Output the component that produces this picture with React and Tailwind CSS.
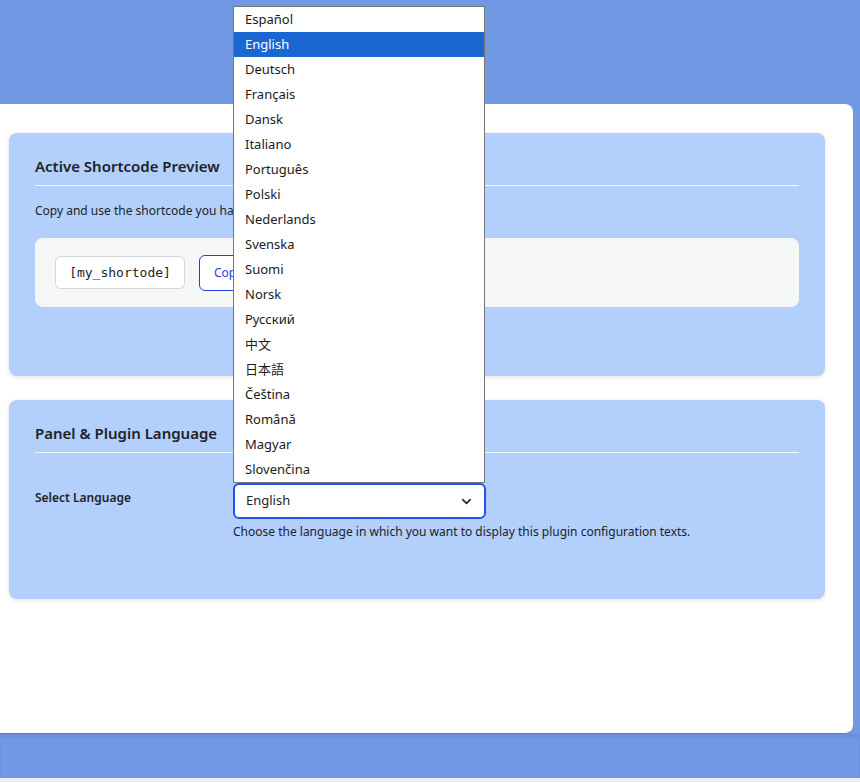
import React, { useState } from 'react'
import { ChevronDown } from 'lucide-react'

const languages = [
  'Español',
  'English',
  'Deutsch',
  'Français',
  'Dansk',
  'Italiano',
  'Português',
  'Polski',
  'Nederlands',
  'Svenska',
  'Suomi',
  'Norsk',
  'Русский',
  '中文',
  '日本語',
  'Čeština',
  'Română',
  'Magyar',
  'Slovenčina',
]

const font = { fontFamily: '"Noto Sans", "Noto Sans CJK SC", sans-serif' }

const Card = ({ title, className, children }) => (
  <div className={`rounded-lg bg-[#b3cffc] px-[26px] pt-[23px] shadow-[0_1px_4px_rgba(0,0,0,0.12)] ${className}`}>
    <h2 className="border-b border-white/80 pb-[8px] text-[15px] font-semibold leading-[21px] text-[#1d2327]">{title}</h2>
    {children}
  </div>
)

export default function App() {
  const [lang, setLang] = useState('English')
  const [open] = useState(true)

  return (
    <div className="flex min-h-[782px] flex-col bg-[#7098e3]" style={font}>
      <div className="h-[104px] shrink-0" />

      {/* Settings panel */}
      <div className="h-[630px] shrink-0 mr-[7px] rounded-r-lg border-b border-[#4f7fd6] bg-white pl-[9px] pr-[28px] pt-[29px]">
        <Card title="Active Shortcode Preview" className="h-[243px]">
          <p className="mt-[16px] text-[12px] leading-[18px] text-[#1d2327]">
            Copy and use the shortcode you have created below.
          </p>
          <div className="mt-[18px] flex h-[69px] items-center gap-[14px] rounded-lg bg-[#f5f6f6] px-[20px]">
            <code
              className="flex h-[33px] w-[130px] items-center justify-center rounded-md border border-[#d4d7da] bg-white text-[13px] text-[#1d2327]"
              style={{ fontFamily: '"DejaVu Sans Mono", monospace' }}
            >
              [my_shortode]
            </code>
            <button className="h-[36px] rounded-md border border-[#1e40e0] bg-white px-[14px] text-[12px] text-[#1e40e0]">
              Copy
            </button>
          </div>
        </Card>

        <Card title="Panel & Plugin Language" className="mt-[24px] h-[199px]">
          <div className="mt-[30px] flex">
            <label className="w-[198px] pt-[6px] text-[12px] font-semibold leading-[18px] text-[#1d2327]">Select Language</label>
            <div>
              <div className="relative w-[253px]">
                {open && (
                  <ul className="absolute bottom-full left-0 z-10 w-[252px] border border-[#767676] bg-white">
                    {languages.map((l) => (
                      <li
                        key={l}
                        onClick={() => setLang(l)}
                        className={`h-[25px] pl-[11px] text-[13px] leading-[25px] ${
                          l === lang ? 'bg-[#1a67d2] text-white' : 'text-[#1a1a1a]'
                        }`}
                      >
                        {l}
                      </li>
                    ))}
                  </ul>
                )}
                <div className="flex h-[36px] items-center justify-between rounded-md border-2 border-[#2452e6] bg-white pl-[11px] pr-[10px] text-[13px] text-[#1d2327]">
                  <span>{lang}</span>
                  <ChevronDown size={15} strokeWidth={2.5} />
                </div>
              </div>
              <p className="mt-[4px] text-[12px] leading-[17px] text-[#1d2327]">
                Choose the language in which you want to display this plugin configuration texts.
              </p>
            </div>
          </div>
        </Card>
      </div>

      <div className="h-[44px] shrink-0 bg-[#7098e3] shadow-[inset_0_3px_3px_rgba(0,0,0,0.06)]" />
      <div className="h-[4px] shrink-0 bg-[#eeeeee]" />
    </div>
  )
}
